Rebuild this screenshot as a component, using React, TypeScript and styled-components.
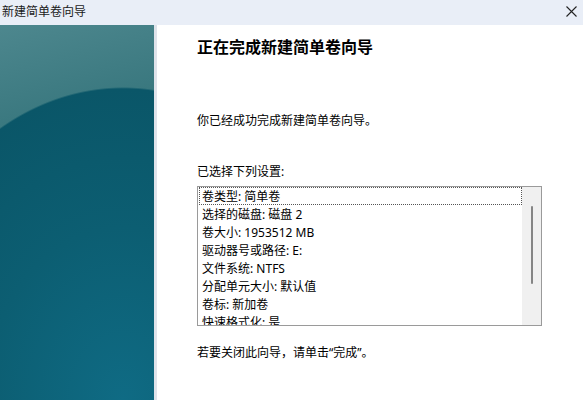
import React from 'react';
import styled, { createGlobalStyle } from 'styled-components';

const GlobalStyle = createGlobalStyle`
    html, body {
        margin: 0;
        padding: 0;
        background: #ffffff;
    }
    body {
        font-family: "Noto Sans", "Noto Sans CJK SC", sans-serif;
        color: #000000;
    }
`

const Window = styled.div`
    width: 583px;
    height: 400px;
    display: flex;
    flex-direction: column;
    overflow: hidden;
    background: #ffffff;
`

const TitleBar = styled.div`
    height: 25px;
    flex: none;
    display: flex;
    align-items: center;
    justify-content: space-between;
    padding: 0 5px 3px 2px;
    box-sizing: border-box;
    background: #e9eef7;
    font-size: 12px;
    color: #1a1a1a;
`

const CloseButton = styled.div`
    width: 14px;
    height: 14px;
    display: flex;
    align-items: center;
    justify-content: center;
`

const Body = styled.div`
    flex: 1;
    display: flex;
    min-height: 0;
`

const SidePanel = styled.div`
    width: 154px;
    flex: none;
    border-right: 3px solid #dfe3ea;
    background:
        radial-gradient(ellipse 250px 313px at 123px 100%, #0f6b84 0%, #0c5e72 55%, #0a5668 99.4%, transparent 100%),
        linear-gradient(165deg, #4d878e 0%, #327279 35%, #22676f 100%);
`

const Content = styled.div`
    flex: 1;
    display: flex;
    flex-direction: column;
    padding: 10px 0 0 40px;
`

const Heading = styled.h1`
    margin: 0;
    font-size: 16px;
    line-height: 22px;
    font-weight: bold;
    font-family: "Noto Sans CJK SC", sans-serif;
`

const Text = styled.p<{ $gap: number }>`
    margin: ${p => p.$gap}px 0 0;
    font-size: 12px;
    line-height: 20px;
    font-family: "Noto Sans", "Noto Sans CJK SC", sans-serif;
`

const ListBox = styled.div`
    margin-top: 4px;
    width: 345px;
    height: 140px;
    box-sizing: border-box;
    border: 1px solid #9a9a9a;
    display: flex;
    background: #ffffff;
`

const Rows = styled.ul`
    list-style: none;
    margin: 0;
    padding: 0 0 0 1px;
    flex: 1;
    overflow: hidden;
`

const Row = styled.li<{ $focused?: boolean }>`
    height: 18px;
    line-height: 18px;
    padding-left: 2px;
    font-size: 12px;
    white-space: nowrap;
    box-sizing: border-box;
    border: 1px dotted ${p => (p.$focused ? '#555555' : 'transparent')};
`

const ScrollBar = styled.div`
    width: 19px;
    flex: none;
    background: #f0f0f0;
    display: flex;
    justify-content: center;
    padding-top: 19px;
    box-sizing: border-box;
`

const Thumb = styled.div`
    width: 2px;
    height: 78px;
    border-radius: 1px;
    background: #858585;
`

const settings = [
    '卷类型: 简单卷',
    '选择的磁盘: 磁盘 2',
    '卷大小: 1953512 MB',
    '驱动器号或路径: E:',
    '文件系统: NTFS',
    '分配单元大小: 默认值',
    '卷标: 新加卷',
    '快速格式化: 是',
];

const App: React.FC = () => {
    return <>
        <GlobalStyle />
        <Window>
            <TitleBar>
                <span>新建简单卷向导</span>
                <CloseButton>
                    <svg width="11" height="11" viewBox="0 0 11 11">
                        <path d="M0.5 0.5 L10.5 10.5 M10.5 0.5 L0.5 10.5" stroke="#222" strokeWidth="1.1" />
                    </svg>
                </CloseButton>
            </TitleBar>
            <Body>
                <SidePanel />
                <Content>
                    <Heading>正在完成新建简单卷向导</Heading>
                    <Text $gap={54}>你已经成功完成新建简单卷向导。</Text>
                    <Text $gap={31}>已选择下列设置:</Text>
                    <ListBox>
                        <Rows>
                            {settings.map((s, i) => <Row key={i} $focused={i === 0}>{s}</Row>)}
                        </Rows>
                        <ScrollBar>
                            <Thumb />
                        </ScrollBar>
                    </ListBox>
                    <Text $gap={17}>若要关闭此向导，请单击“完成”。</Text>
                </Content>
            </Body>
        </Window>
    </>
}

export default App;
